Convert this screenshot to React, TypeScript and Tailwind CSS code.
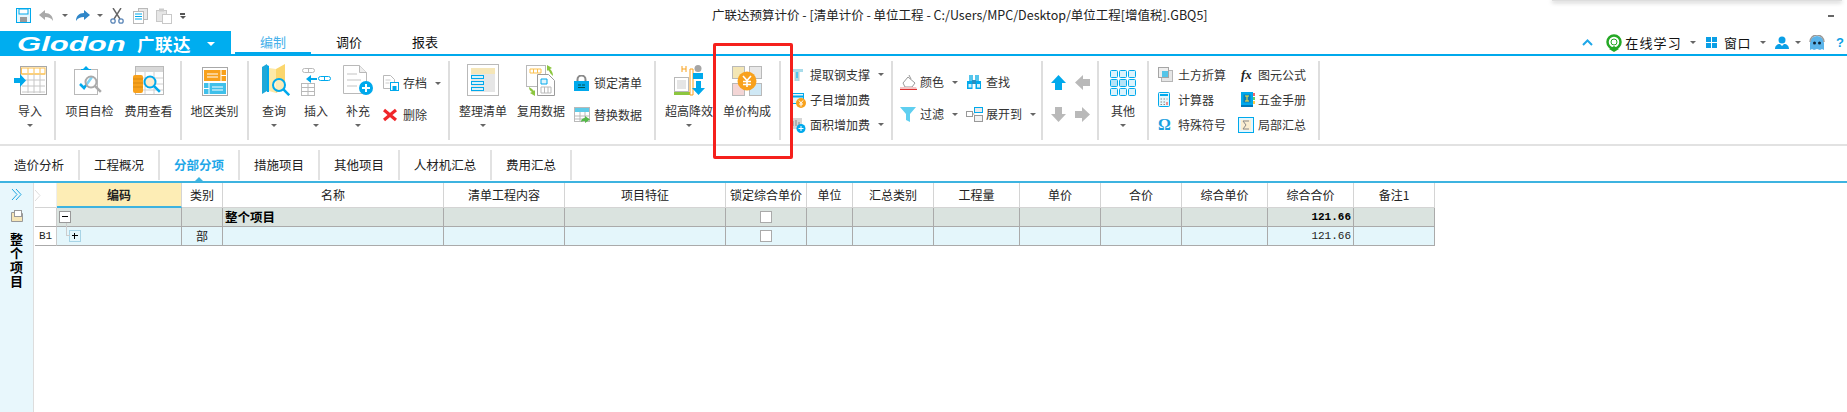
/*
 * 广联达预算计价 ribbon + 分部分项 grid
 */
import type { ReactNode } from "react";

const BLUE = "#00a9ec";
const GRAY = "#b9b9b9";
const ORANGE = "#f8a11c";

const Svg = ({ w, h, children }: { w: number; h: number; children: ReactNode }) => (
  <svg width={w} height={h} viewBox={`0 0 ${w} ${h}`} className="block shrink-0">
    {children}
  </svg>
);

const Caret = () => <span className="block w-0 h-0 border-x-[3px] border-t-[3px] border-x-transparent border-t-[#666] shrink-0" />;

const Lens = ({ x, y, r = 6, c = BLUE }: { x: number; y: number; r?: number; c?: string }) => (
  <g fill="none" stroke={c}>
    <circle cx={x} cy={y} r={r} strokeWidth="2" fill="#fff" fillOpacity=".5" />
    <path d={`M${x + r * 0.7} ${y + r * 0.7}l6 6`} strokeWidth="2.5" />
  </g>
);

/* ---- quick access ---- */
const SaveIcon = () => (
  <Svg w={15} h={15}>
    <rect x=".5" y=".5" width="14" height="14" fill="#e6f6fd" stroke={BLUE} />
    <rect x="3" y="1" width="9" height="5" fill="#fff" stroke={BLUE} />
    <rect x="4" y="9" width="7" height="5" fill="#9a9a9a" />
  </Svg>
);
const Arrow = ({ flip, c }: { flip?: boolean; c: string }) => (
  <Svg w={15} h={13}>
    <path d={flip ? "M9 1l6 5-6 5V8C5 8 3 9 1 12 1 7 4 4 9 4z" : "M6 1L0 6l6 5V8c4 0 6 1 8 4 0-5-3-8-8-8z"} fill={c} />
  </Svg>
);
const ScissorsIcon = () => (
  <Svg w={14} h={16}>
    <path d="M3 0l7 11M11 0L4 11" stroke="#666" strokeWidth="1.4" fill="none" />
    <circle cx="3" cy="13" r="2.2" fill="none" stroke="#5b86b8" strokeWidth="1.3" />
    <circle cx="11" cy="13" r="2.2" fill="none" stroke="#5b86b8" strokeWidth="1.3" />
  </Svg>
);
const CopyIcon = () => (
  <Svg w={16} h={16}>
    <rect x="5.5" y=".5" width="9" height="11" fill="#e8e8e8" stroke={GRAY} />
    <rect x=".5" y="3.5" width="10" height="12" fill="#fff" stroke={GRAY} />
    <path d="M2 6h7M2 8.5h7M2 11h7" stroke={BLUE} strokeWidth="1.2" />
  </Svg>
);
const PasteIcon = () => (
  <Svg w={16} h={16}>
    <rect x=".5" y="2.5" width="10" height="11" fill="#e6e6e6" stroke="#c8c8c8" />
    <rect x="3" y=".5" width="5" height="3" fill="#ccc" />
    <rect x="6.5" y="6.5" width="9" height="9" fill="#fff" stroke="#c8c8c8" />
  </Svg>
);

/* ---- large ribbon icons ---- */
const ImportIcon = () => (
  <Svg w={33} h={30}>
    <rect x="6.5" y=".5" width="26" height="28" fill="#fff" stroke="#a8a8a8" />
    <path d="M8 8h23M14 2v5M20 2v5M26 2v5" stroke="#fbc04e" />
    <rect x="7.5" y="2" width="23.5" height="6" fill="none" stroke="#fbc04e" />
    <path d="M8 14h23M8 20h23M14 8v19M20 8v19M26 8v19M8 26h23" stroke="#c6c6c6" />
    <path d="M0 12h6V8l6 6.5L6 21v-4H0z" fill={BLUE} />
  </Svg>
);
const CheckIcon = () => (
  <Svg w={32} h={30}>
    <rect x=".5" y="3.5" width="23" height="25" fill="#fff" stroke={GRAY} />
    <path d="M9 3l3-3 3 3z M7 3h10v1H7z" fill={BLUE} />
    <path d="M6 18l4 4 8-11" fill="none" stroke={BLUE} strokeWidth="2.5" />
    <Lens x={17} y={16} r={5.5} c="#aaa" />
  </Svg>
);
const CostIcon = () => (
  <Svg w={32} h={30}>
    <rect x="2.5" y=".5" width="28" height="28" fill="#fff" stroke={GRAY} />
    <rect x="3" y="1" width="27" height="5" fill="#d8d8d8" />
    <path d="M3 12h27M3 18h27M3 24h27M12 6v22M21 6v22" stroke="#d0d0d0" />
    <rect x="0" y="9" width="10" height="18" rx="2" fill={ORANGE} />
    <path d="M0 13h10M0 17h10M0 21h10" stroke="#d98a10" />
    <circle cx="17" cy="16" r="6" fill="#fad9a0" />
    <Lens x={17} y={16} r={5.5} />
  </Svg>
);
const RegionIcon = () => (
  <Svg w={26} h={29}>
    <rect x=".5" y=".5" width="25" height="28" fill="#fff" stroke="#a8a8a8" />
    <rect x="2" y="3" width="22" height="11" fill={ORANGE} />
    <path d="M19 3v11M19 8.5h5M5 7h11M5 10h11" stroke="#fff" />
    <rect x="2" y="16" width="22" height="11" fill="#3fc0ea" />
    <path d="M7 16v11M2 21.5h5M10 20h11M10 23h11" stroke="#fff" />
  </Svg>
);
const QueryIcon = () => (
  <Svg w={31} h={32}>
    <path d="M3 3l5-3v27l-5 3z" fill="#1fa8d8" />
    <path d="M8 1l2 1v26H8z" fill={BLUE} />
    <path d="M10 4l7 1v24l-7-2z" fill="#fde9a8" />
    <path d="M17 5l9-5v24l-9 5z" fill="#fbd66d" />
    <Lens x={20} y={21} r={6} />
  </Svg>
);
const InsertIcon = () => (
  <Svg w={30} h={29}>
    <rect x="1.5" y="1.5" width="12" height="4" rx="2" fill="#fff" stroke={GRAY} />
    <path d="M7.5 1.5v4" stroke={GRAY} />
    <path d="M5 12l5-4v3h6v2h-6v3z" fill={BLUE} />
    <rect x="17.5" y="9.5" width="12" height="4" rx="2" fill="#fff" stroke={BLUE} />
    <path d="M23.5 9.5v4" stroke={BLUE} />
    <rect x=".5" y="16.5" width="13" height="12" fill="#fff" stroke={GRAY} />
    <path d="M1 20.5h12M1 24.5h12M7 17v11" stroke={GRAY} />
  </Svg>
);
const AddIcon = () => (
  <Svg w={30} h={31}>
    <path d="M.5.5h16l7 7v21H.5z" fill="#fff" stroke={GRAY} />
    <path d="M16.5.5v7h7" fill="#eee" stroke={GRAY} />
    <path d="M4 9h10M4 15h14M4 21h10" stroke="#d8d8d8" strokeWidth="1.5" />
    <circle cx="23" cy="23" r="7" fill={BLUE} />
    <path d="M23 19v8M19 23h8" stroke="#fff" strokeWidth="2" />
  </Svg>
);
const TidyIcon = () => (
  <Svg w={32} h={32}>
    <rect x=".5" y=".5" width="31" height="31" fill="#fff" stroke={GRAY} />
    <rect x="4" y="4" width="24" height="6" fill="#f5e6b8" />
    <rect x="4" y="10" width="24" height="18" fill="#e6e6e6" />
    <rect x="4.5" y="11.5" width="12" height="3" fill="#d8f2fb" stroke={BLUE} />
    <rect x="4.5" y="17.5" width="12" height="3" fill="#d8f2fb" stroke={BLUE} />
    <rect x="4.5" y="23.5" width="12" height="3" fill="#d8f2fb" stroke={BLUE} />
  </Svg>
);
const ReuseIcon = () => (
  <Svg w={30} h={31}>
    <rect x=".5" y=".5" width="19" height="21" fill="#fff" stroke={GRAY} />
    <path d="M4 4h11v4H4zM7.5 4v4M11.5 4v4" fill="#fff" stroke="#fbc04e" />
    <path d="M11.5 9.5h11l6 6v15h-17z" fill="#fff" stroke="#9a9a9a" />
    <path d="M15 14h6v5h-6z" fill="#dff4fc" stroke={BLUE} />
    <path d="M15 22h10v6H15zM18.5 22v6M22 22v6" fill="none" stroke={GRAY} />
    <path d="M21 0l5 3-2 1c2 2 3 4 3 7l-3-3c0-1-1-2-2-3l-1 1z" fill="#8cc63f" />
    <path d="M9 31l-5-3 2-1c-2-1-3-3-3-5l3 2 2 2 1-1z" fill="#8cc63f" />
  </Svg>
);
const HighIcon = () => (
  <Svg w={31} h={31}>
    <rect x=".5" y="12.5" width="14" height="14" fill="#fff" stroke={GRAY} />
    <path d="M3 15h9v9H3z" fill="#e5e5e5" />
    <path d="M0 27h16v3H0z" fill="#8cc63f" />
    <path d="M16 4h3v26h-3zM8 1v6M12 1v6M8 4h4" stroke={ORANGE} fill="none" />
    <circle cx="24" cy="3.5" r="3.5" fill="#a5a5a5" />
    <path d="M19 8h10v6H19z" fill={BLUE} />
    <path d="M22 16h5v7h4l-6.5 7L18 23h4z" fill={BLUE} />
  </Svg>
);
const UnitPriceIcon = () => (
  <Svg w={30} h={30}>
    <rect x=".5" y=".5" width="12" height="12" fill="#f3e6b5" stroke={GRAY} />
    <rect x="17.5" y=".5" width="12" height="12" fill="#e8e8e8" stroke={GRAY} />
    <rect x=".5" y="17.5" width="12" height="12" fill="#f3d5d5" stroke={GRAY} />
    <rect x="17.5" y="17.5" width="12" height="12" fill="#cfe8f5" stroke={GRAY} />
    <circle cx="15" cy="15" r="9.5" fill={ORANGE} />
    <path d="M11 10l4 4.5 4-4.5M15 14.5V21M11 15.5h8M11 18.5h8" fill="none" stroke="#fff" strokeWidth="1.6" />
  </Svg>
);
const OtherIcon = () => (
  <Svg w={26} h={26}>
    {[0, 9, 18].map((y) =>
      [0, 9, 18].map((x) => (
        <rect key={`${x}-${y}`} x={x + 0.5} y={y + 0.5} width="7" height="7" rx="1" fill={y === 9 && x < 18 ? "#b5e3f7" : "#dcf3fc"} stroke={BLUE} />
      )),
    )}
  </Svg>
);

/* ---- small ribbon icons ---- */
const ArchiveIcon = () => (
  <Svg w={16} h={16}>
    <path d="M.5.5h7l4 4v9H.5z" fill="#fff" stroke={GRAY} />
    <path d="M2.5 5h5M2.5 8h4" stroke="#ccc" />
    <rect x="7.5" y="7.5" width="8" height="8" fill="#fff" stroke={BLUE} />
    <rect x="9.5" y="11" width="4" height="4" fill={BLUE} />
  </Svg>
);
const DeleteIcon = () => (
  <Svg w={14} h={14}>
    <path d="M1 2l12 10M13 2L1 12" stroke="#f0262a" strokeWidth="3.2" />
  </Svg>
);
const LockIcon = () => (
  <Svg w={15} h={16}>
    <path d="M3.5 7V4.500a4 4 0 018 0V7" fill="none" stroke="#8a8a8a" strokeWidth="2" />
    <rect x="0" y="6" width="15" height="10" fill={BLUE} />
    <path d="M4 10h3M8 10h3M4 12.5h7" stroke="#055" strokeWidth="1" />
  </Svg>
);
const ReplaceIcon = () => (
  <Svg w={16} h={16}>
    <rect x=".5" y=".5" width="15" height="14" fill="#fff" stroke={GRAY} />
    <rect x="1" y="1" width="14" height="4" fill="#5fcbe8" />
    <path d="M1 9h14M1 12h14M6 5v9M11 5v9" stroke={GRAY} />
    <path d="M7 15c0-3 2-4 4-4V9l5 3.5-5 3.5V14c-2 0-3 0-4 1z" fill="#54b948" />
  </Svg>
);
const SteelIcon = () => (
  <Svg w={14} h={14}>
    <path d="M1 1h12v3H9v9H5V4H1z" fill="#a9dcea" />
    <path d="M5 4v9M9 4v9" stroke="#c5c5c5" />
    <path d="M7 4v6" stroke={BLUE} />
  </Svg>
);
const SubFeeIcon = () => (
  <Svg w={16} h={16}>
    <path d="M0 1v14" stroke="#0078b8" strokeWidth="1.5" />
    <rect x="1.5" y="1.5" width="12" height="10" fill="#e5f6fc" stroke={BLUE} />
    <path d="M2 4.500h11" stroke={BLUE} strokeWidth="2" />
    <circle cx="11" cy="11" r="5" fill={ORANGE} />
    <path d="M9 8.500l2 2.500 2-2.500M11 11v3.500M9 12h4" fill="none" stroke="#fff" />
  </Svg>
);
const AreaFeeIcon = () => (
  <Svg w={16} h={16}>
    <rect x="0" y="1" width="12" height="11" fill="#d6d6d6" />
    <path d="M3 9V4M6 9V3M9 9V5" stroke="#888" />
    <circle cx="11" cy="11.5" r="4.5" fill={BLUE} />
    <path d="M11 9v5M8.500 11.500h5" stroke="#fff" />
  </Svg>
);
const ColorIcon = () => (
  <Svg w={17} h={17}>
    <path d="M3 9l5-6 7 6-3 4H5z" fill="#fff" stroke="#999" />
    <path d="M9 1l2 4" stroke="#999" />
    <path d="M0 13h16l1 2H0z" fill="#f3c6c6" />
    <path d="M0 15.500h17" stroke="#d33" />
  </Svg>
);
const FindIcon = () => (
  <Svg w={16} h={15}>
    <path d="M3 0h4v6H3zM9 0h4v6H9z" fill="#55c5ec" />
    <path d="M1 6h5.500v8H1zM9.500 6H15v8H9.500z" fill={BLUE} />
    <path d="M6 5h4v4H6z" fill="#2a8fc0" />
    <path d="M2.500 9h3v3.500h-3zM11 9h3v3.500h-3z" fill="#d6f1fb" />
  </Svg>
);
const FilterIcon = () => (
  <Svg w={16} h={15}>
    <path d="M0 0h16l-6 7v8l-4-2V7z" fill="#5fcff0" />
  </Svg>
);
const ExpandIcon = () => (
  <Svg w={17} h={15}>
    <rect x="8.5" y=".5" width="8" height="5" fill="#e9e9e9" stroke={BLUE} />
    <rect x=".5" y="4.500" width="6" height="5" fill="#fff" stroke="#999" />
    <rect x="8.5" y="8.500" width="8" height="6" fill="#f3f3f3" stroke="#999" />
    <path d="M6.500 7h2" stroke="#999" />
  </Svg>
);
const Mover = ({ d, c }: { d: string; c: string }) => (
  <Svg w={15} h={15}>
    <path d={d} fill={c} />
  </Svg>
);
const EarthIcon = () => (
  <Svg w={15} h={15}>
    <rect x="3.5" y="3.5" width="11" height="11" fill="#e6e6e6" stroke="#b5b5b5" />
    <rect x=".5" y=".5" width="10" height="10" fill="#eee" stroke="#a5a5a5" />
    <rect x="4" y="4" width="6" height="6" fill="#55c5e8" />
  </Svg>
);
const CalcIcon = () => (
  <Svg w={12} h={15}>
    <rect x=".5" y=".5" width="11" height="14" rx="1" fill="#e5f6fc" stroke={BLUE} />
    <path d="M2 3h8" stroke={BLUE} strokeWidth="2" />
    <path d="M2.500 7h1.500M5.500 7h1.500M8.500 7h1M2.500 10h1.500M5.500 10h1.500M2.500 12.500h1.500M5.500 12.500h1.500" stroke="#888" />
    <path d="M8.500 10h1v3h-1z" fill="#e33" />
  </Svg>
);
const FxIcon = () => <span className="block w-[14px] text-[13px] leading-none italic font-bold text-[#222] [font-family:'Liberation_Serif',serif]">fx</span>;
const ManualIcon = () => (
  <Svg w={14} h={15}>
    <rect x="0" y="0" width="12" height="13" fill={BLUE} />
    <path d="M0 14h12" stroke="#0078b8" strokeWidth="2" />
    <rect x="2.5" y="2.5" width="7" height="8" fill="#0d7fb5" />
    <path d="M4 4h4M6 4v5M4 9h4" stroke="#ffe23c" />
    <path d="M13 1v3" stroke="#e33" strokeWidth="1.5" />
    <path d="M13 5v3" stroke="#3b3" strokeWidth="1.5" />
    <path d="M13 9v3" stroke="#fb0" strokeWidth="1.5" />
  </Svg>
);
const SumIcon = () => (
  <div className="-ml-[3px]">
    <Svg w={16} h={16}>
      <rect x=".5" y=".5" width="15" height="15" fill="#e5f6fc" stroke={BLUE} />
      <rect x="3" y="3" width="10" height="10" fill="#fbeed0" />
      <path d="M11 4H5l3 4-3 4h6" fill="none" stroke="#888" />
    </Svg>
  </div>
);

/* ---- ribbon pieces ---- */
function Big({ icon, label, caret = true, className = "w-[58px]" }: { icon: ReactNode; label: string; caret?: boolean; className?: string }) {
  return (
    <div className={`flex flex-col items-center shrink-0 ${className}`}>
      <div className="h-[41px] flex items-end justify-center pb-[6px]">{icon}</div>
      <div className="h-[18px] leading-[18px] whitespace-nowrap">{label}</div>
      {caret && (
        <div className="mt-[4px]">
          <Caret />
        </div>
      )}
    </div>
  );
}

function Small({
  icon,
  label,
  caret,
  className = "",
  iconClass = "w-[20px]",
}: {
  icon?: ReactNode;
  label: string;
  caret?: boolean;
  className?: string;
  iconClass?: string;
}) {
  return (
    <div className={`flex items-center shrink-0 ${className}`}>
      <div className={`shrink-0 ${iconClass}`}>{icon}</div>
      <span className="whitespace-nowrap">{label}</span>
      {caret && (
        <span className="ml-[8px]">
          <Caret />
        </span>
      )}
    </div>
  );
}

const Group = ({ className, children }: { className: string; children: ReactNode }) => (
  <div className={`h-[79px] flex shrink-0 border-r-2 border-[#dedede] ${className}`}>{children}</div>
);

/* ---- grid ---- */
const COLUMNS = "grid-cols-[22px_125px_41px_221px_121px_161px_81px_46px_81px_86px_81px_81px_86px_86px_81px]";
const HEADERS = ["", "编码", "类别", "名称", "清单工程内容", "项目特征", "锁定综合单价", "单位", "汇总类别", "工程量", "单价", "合价", "综合单价", "综合合价", "备注1"];

const Box = () => <span className="block w-[12px] h-[12px] bg-white border border-[#aaa]" />;

const SHEET_TABS = [
  { label: "造价分析", cls: "w-[80px]" },
  { label: "工程概况", cls: "w-[80px]" },
  { label: "分部分项", cls: "w-[80px]", active: true },
  { label: "措施项目", cls: "w-[80px]" },
  { label: "其他项目", cls: "w-[80px]" },
  { label: "人材机汇总", cls: "w-[92px]" },
  { label: "费用汇总", cls: "w-[80px]" },
];

export default function App() {
  return (
    <div className="relative w-[1847px] h-[412px] overflow-hidden bg-white text-[12px] text-[#333] [font-family:'Noto_Sans_CJK_SC','Noto_Sans',sans-serif]">
      {/* Edge of another window lying over the title bar */}
      <div className="absolute left-[1552px] top-0 w-[290px] h-[1px] bg-[#ddd] shadow-[0_1px_4px_rgba(0,0,0,0.55)]" />

      {/* Title bar */}
      <div className="h-[31px] flex items-center pl-[16px]">
        <SaveIcon />
        <div className="ml-[8px]">
          <Arrow c="#a9a9a9" />
        </div>
        <div className="ml-[8px]">
          <Caret />
        </div>
        <div className="ml-[7px]">
          <Arrow flip c="#2f86c8" />
        </div>
        <div className="ml-[7px]">
          <Caret />
        </div>
        <div className="ml-[7px]">
          <ScissorsIcon />
        </div>
        <div className="ml-[9px]">
          <CopyIcon />
        </div>
        <div className="ml-[7px]">
          <PasteIcon />
        </div>
        <div className="ml-[8px] w-[5px] flex flex-col items-center gap-[1px]">
          <span className="block w-[5px] h-[2px] bg-[#555]" />
          <span className="block w-0 h-0 border-x-[3px] border-t-[3px] border-x-transparent border-t-[#555]" />
        </div>
        <div className="ml-[527px] whitespace-nowrap text-[12.5px] text-[#222]">广联达预算计价 - [清单计价 - 单位工程 - C:/Users/MPC/Desktop/单位工程[增值税].GBQ5]</div>
        <div className="ml-auto mr-[13px] w-[6px] h-[2px] bg-[#666]" />
      </div>

      {/* Logo + ribbon tabs */}
      <div className="h-[25px] flex border-b-2 border-[#00a9ec]">
        <div className="w-[231px] h-[25px] bg-[#00adef] flex items-center text-white shrink-0 pl-[17px]">
          <span className="block w-[113px] origin-left scale-x-[1.48] text-[21px] leading-none font-bold italic whitespace-nowrap [font-family:'Liberation_Sans',sans-serif]">Glodon</span>
          <span className="ml-[7px] text-[17.5px] leading-none font-bold tracking-[0.5px]">广联达</span>
          <span className="ml-[16px] block w-0 h-0 border-x-[4px] border-t-[4px] border-x-transparent border-t-white" />
        </div>
        <div className="ml-[4px] flex text-[13px] text-[#111]">
          <div className="w-[76px] h-[23px] leading-[22px] text-center text-[#45b0ea] border-b-2 border-[#00a9ec]">编制</div>
          <div className="w-[76px] h-[23px] leading-[22px] text-center">调价</div>
          <div className="w-[76px] h-[23px] leading-[22px] text-center">报表</div>
        </div>
        <div className="ml-auto flex items-center h-[23px] text-[13px] text-[#111] pr-[3px]">
          <Svg w={11} h={7}>
            <path d="M1 6l4.500-4.500L10 6" fill="none" stroke="#1ea7e8" strokeWidth="2" />
          </Svg>
          <div className="ml-[12px]">
            <Svg w={18} h={18}>
              <circle cx="9" cy="8" r="6.5" fill="none" stroke="#25a825" strokeWidth="2.5" />
              <circle cx="9" cy="8" r="3" fill="#fff" stroke="#25a825" />
              <path d="M4 15l5-3 5 3-5 3z" fill="#25a825" />
            </Svg>
          </div>
          <span className="ml-[2px] tracking-[1.2px]">在线学习</span>
          <span className="ml-[8px]">
            <Caret />
          </span>
          <div className="ml-[10px]">
            <Svg w={11} h={11}>
              <path d="M0 0h5v5H0zM6 0h5v5H6zM0 6h5v5H0zM6 6h5v5H6z" fill="#0a9fe6" />
            </Svg>
          </div>
          <span className="ml-[7px] tracking-[0.5px]">窗口</span>
          <span className="ml-[9px]">
            <Caret />
          </span>
          <div className="ml-[9px]">
            <Svg w={14} h={13}>
              <circle cx="7" cy="4" r="3.5" fill="#0a9fe6" />
              <path d="M0 13c0-3 2-5 5-5l2 2 2-2c3 0 5 2 5 5z" fill="#0a9fe6" />
            </Svg>
          </div>
          <span className="ml-[6px]">
            <Caret />
          </span>
          <div className="ml-[8px]">
            <Svg w={16} h={16}>
              <path d="M1 8a7 7 0 0114 0v7l-2-1-2 1-3-1-3 1-2-1-2 1z" fill="#5bb4ea" />
              <path d="M1 7a7 7 0 0114 0" fill="none" stroke="#999" strokeWidth="1.5" />
              <circle cx="5.5" cy="8" r="1.5" fill="#123" />
              <circle cx="10.5" cy="8" r="1.5" fill="#123" />
            </Svg>
          </div>
          <span className="ml-[11px] font-bold text-[#0a9fe6] [font-family:'Liberation_Sans',sans-serif]">?</span>
        </div>
      </div>

      {/* Ribbon */}
      <div className="h-[90px] flex pt-[5px] border-b-2 border-[#e2e2e2]">
        <Group className="w-[56px] pl-[2px]">
          <Big icon={<ImportIcon />} label="导入" className="w-[56px]" />
        </Group>
        <Group className="w-[126px] pl-[4px]">
          <Big icon={<CheckIcon />} label="项目自检" caret={false} className="w-[59px]" />
          <Big icon={<CostIcon />} label="费用查看" caret={false} className="w-[59px]" />
        </Group>
        <Group className="w-[67px] justify-center">
          <Big icon={<RegionIcon />} label="地区类别" caret={false} />
        </Group>
        <Group className="w-[201px] pl-[4px]">
          <Big icon={<QueryIcon />} label="查询" className="w-[42px]" />
          <Big icon={<InsertIcon />} label="插入" className="w-[42px]" />
          <Big icon={<AddIcon />} label="补充" className="w-[42px]" />
          <div className="ml-[4px] flex flex-col pt-[6px]">
            <Small icon={<ArchiveIcon />} label="存档" caret className="h-[32px]" />
            <Small icon={<DeleteIcon />} label="删除" className="h-[32px]" />
          </div>
        </Group>
        <Group className="w-[206px] pl-[4px]">
          <Big icon={<TidyIcon />} label="整理清单" />
          <Big icon={<ReuseIcon />} label="复用数据" caret={false} />
          <div className="ml-[4px] flex flex-col pt-[6px]">
            <Small icon={<LockIcon />} label="锁定清单" className="h-[32px]" />
            <Small icon={<ReplaceIcon />} label="替换数据" className="h-[32px]" />
          </div>
        </Group>
        <Group className="w-[125px] pl-[4px]">
          <Big icon={<HighIcon />} label="超高降效" />
          <Big icon={<UnitPriceIcon />} label="单价构成" caret={false} />
        </Group>
        <Group className="w-[112px] pl-[9px] flex-col">
          <Small icon={<SteelIcon />} label="提取钢支撑" caret className="h-[25px] mt-[1px]" />
          <Small icon={<SubFeeIcon />} label="子目增加费" className="h-[25px]" />
          <Small icon={<AreaFeeIcon />} label="面积增加费" caret className="h-[25px]" />
        </Group>
        <Group className="w-[150px] pl-[7px] pt-[5px] flex-col">
          <div className="flex h-[32px]">
            <Small icon={<ColorIcon />} label="颜色" caret className="w-[66px]" />
            <Small icon={<FindIcon />} label="查找" />
          </div>
          <div className="flex h-[32px]">
            <Small icon={<FilterIcon />} label="过滤" caret className="w-[66px]" />
            <Small icon={<ExpandIcon />} label="展开到" caret />
          </div>
        </Group>
        <Group className="w-[56px] pl-[8px] pt-[5px] flex-col">
          <div className="flex h-[32px] items-center gap-[9px]">
            <Mover d="M7.5 0L15 8h-4v7H4V8H0z" c={BLUE} />
            <Mover d="M0 7.5L8 0v4h7v7H8v4z" c={GRAY} />
          </div>
          <div className="flex h-[32px] items-center gap-[9px]">
            <Mover d="M7.5 15L15 7h-4V0H4v7H0z" c={GRAY} />
            <Mover d="M15 7.5L7 0v4H0v7h7v4z" c={GRAY} />
          </div>
        </Group>
        <Group className="w-[50px] justify-center">
          <Big icon={<OtherIcon />} label="其他" className="w-[48px]" />
        </Group>
        <Group className="w-[171px] pl-[9px] pt-[1px]">
          <div className="flex flex-col w-[83px]">
            <Small icon={<EarthIcon />} label="土方折算" className="h-[25px]" />
            <Small icon={<CalcIcon />} label="计算器" className="h-[25px]" />
            <Small
              icon={
                <span className="block text-[16px] leading-none font-bold text-[#1a9fe0] [font-family:'Liberation_Serif',serif]">Ω</span>
              }
              label="特殊符号"
              className="h-[25px]"
            />
          </div>
          <div className="flex flex-col">
            <Small icon={<FxIcon />} label="图元公式" className="h-[25px]" iconClass="w-[17px]" />
            <Small icon={<ManualIcon />} label="五金手册" className="h-[25px]" iconClass="w-[17px]" />
            <Small icon={<SumIcon />} label="局部汇总" className="h-[25px]" iconClass="w-[17px]" />
          </div>
        </Group>
      </div>

      {/* Sheet tabs */}
      <div className="relative h-[35px] flex pt-[4px] text-[12.5px] text-[#222]">
        {SHEET_TABS.map((t) => (
          <div
            key={t.label}
            className={`relative h-[30px] leading-[30px] text-center border-r-2 border-[#e2e2e2] ${t.cls} ${t.active ? "font-bold text-[#1ea7e8]" : ""}`}
          >
            {t.label}
            {t.active && <span className="absolute left-1/2 -translate-x-1/2 -bottom-[1px] w-0 h-0 border-x-[4px] border-b-[4px] border-x-transparent border-b-[#3db3e0]" />}
          </div>
        ))}
      </div>

      {/* Work area */}
      <div className="h-[231px] flex border-t-2 border-[#3db3e0]">
        <div className="w-[34px] shrink-0 bg-[#e8f7fc] border-r border-[#ddd] flex flex-col items-center pt-[5px]">
          <Svg w={11} h={13}>
            <path d="M1 1l5 5.500L1 12M5 1l5 5.500L5 12" fill="none" stroke="#22a7e0" />
          </Svg>
          <div className="mt-[9px]">
            <Svg w={12} h={12}>
              <path d="M.5 2.500h4l1 1h6v8H.5z" fill="#f6e6b8" stroke="#999" />
              <rect x="3.5" y=".5" width="7" height="6" fill="#fff" stroke="#999" />
            </Svg>
          </div>
          <div className="mt-[10px] w-[13px] text-[13px] leading-[14px] font-bold text-black text-center">整个项目</div>
        </div>
        <div className="flex-1 pl-[1px]">
          <div className={`grid ${COLUMNS} w-fit text-[#222]`}>
            {HEADERS.map((h, i) => (
              <div
                key={i}
                className={`h-[25px] leading-[24px] text-center whitespace-nowrap border-r border-b border-[#d4d4d4] ${i === 1 ? "bg-[#fdedb5] font-bold border-b-2 border-b-[#3db3e0]" : "bg-white"} ${i === 0 ? "border-r-[#eee] flex items-center" : ""}`}
              >
                {i === 0 && (
                  <Svg w={6} h={11}>
                    <path d="M0 0l5 5.5L0 11" fill="none" stroke="#ddd" />
                  </Svg>
                )}
                {h}
              </div>
            ))}
            {HEADERS.map((h, i) => (
              <div
                key={i}
                className={`h-[19px] leading-[18px] px-[2px] border-r border-b border-[#aaa] flex items-center font-bold text-black ${i === 0 ? "bg-white border-r-[#ccc]" : "bg-[#dae3df]"} ${h === "锁定综合单价" ? "justify-center" : ""} ${h === "综合合价" ? "justify-end" : ""}`}
              >
                {h === "编码" && (
                  <span className="block w-[12px] h-[12px] border border-[#999] bg-white relative">
                    <span className="absolute left-[2px] top-[4px] w-[6px] h-px bg-black" />
                  </span>
                )}
                {h === "名称" && <span className="text-[12.5px]">整个项目</span>}
                {h === "锁定综合单价" && <Box />}
                {h === "综合合价" && <span className="text-[11px] [font-family:'Liberation_Mono',monospace]">121.66</span>}
              </div>
            ))}
            {HEADERS.map((h, i) => (
              <div
                key={i}
                className={`h-[19px] leading-[18px] border-r border-b border-[#aaa] flex items-center text-[#222] ${i === 0 ? "bg-white border-r-[#ccc] justify-center" : "bg-[#e4f6fb]"} ${h === "类别" || h === "锁定综合单价" ? "justify-center" : ""} ${h === "综合合价" ? "justify-end px-[2px]" : ""}`}
              >
                {i === 0 && <span className="text-[11px] [font-family:'Liberation_Mono',monospace]">B1</span>}
                {h === "编码" && (
                  <span className="ml-[12px] block w-[12px] h-[12px] border border-[#a8d4e6] relative">
                    <span className="absolute -left-[4px] top-[4px] w-[4px] h-px bg-[#ccc]" />
                    <span className="absolute -left-[4px] -top-[8px] w-px h-[12px] bg-[#ccc]" />
                    <span className="absolute left-[2px] top-[4px] w-[6px] h-px bg-black" />
                    <span className="absolute left-[4px] top-[2px] w-px h-[6px] bg-black" />
                  </span>
                )}
                {h === "类别" && "部"}
                {h === "锁定综合单价" && <Box />}
                {h === "综合合价" && <span className="text-[11px] [font-family:'Liberation_Mono',monospace]">121.66</span>}
              </div>
            ))}
          </div>
        </div>
      </div>

      {/* Red annotation drawn over the screenshot */}
      <div className="absolute left-[713px] top-[43px] w-[80px] h-[116px] border-[3px] border-[#f5201c] rounded-[2px]" />
    </div>
  );
}
